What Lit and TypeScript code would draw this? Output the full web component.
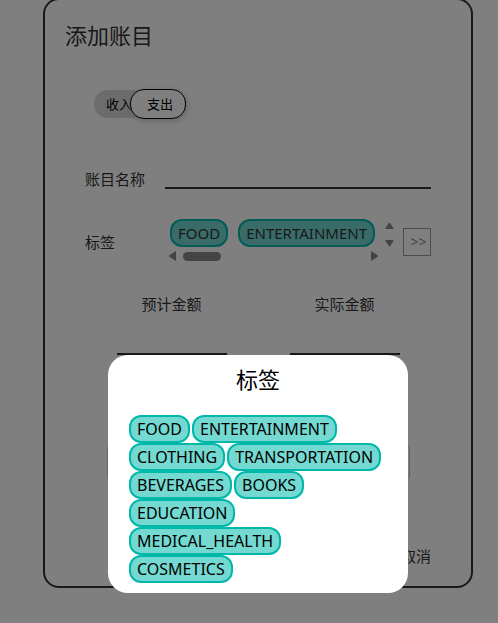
import { LitElement, html, css } from "lit";
import { customElement, property, state } from "lit/decorators.js";

const TAGS = [
  "FOOD", "ENTERTAINMENT", "CLOTHING", "TRANSPORTATION", "BEVERAGES",
  "BOOKS", "EDUCATION", "MEDICAL_HEALTH", "COSMETICS",
];

@customElement("tag-chip")
class TagChip extends LitElement {
  @property() label = "";
  static styles = css`
    :host { display: block; flex: none; }
    .chip {
      display: block;
      box-sizing: border-box;
      height: 28px;
      padding: 0 6px;
      border: 2px solid #00b8a9;
      border-radius: 12px;
      background: #73d9d1;
      color: inherit;
      font: inherit;
      font-family: "Noto Sans", sans-serif;
      line-height: 24px;
      white-space: nowrap;
    }
  `;
  render() {
    return html`<button class="chip" type="button">${this.label}</button>`;
  }
}

@customElement("app-root")
class AppRoot extends LitElement {
  @state() selected = ["FOOD", "ENTERTAINMENT"];

  static styles = css`
    :host {
      display: block;
      min-height: 100vh;
      overflow: hidden;
      background: #fff;
      color: #333;
      font: 15px/20px "Open Sans", "Noto Sans CJK SC", sans-serif;
    }
    * { box-sizing: border-box; }
    button, input { font: inherit; color: inherit; }
    .page { padding: 0 25px 35px 43px; }
    .card {
      display: flex;
      flex-direction: column;
      margin-top: -2px;
      padding: 20px 20px;
      border: 2px solid #333;
      border-radius: 16px;
    }
    h1 { margin: 0; font-size: 22px; font-weight: 400; line-height: 30px; }
    .switch {
      display: flex;
      align-items: center;
      align-self: flex-start;
      margin: 39px 0 0 29px;
      color: #000;
      font-size: 13px;
      line-height: 28px;
    }
    .switch label { display: block; }
    .switch input { position: absolute; opacity: 0; margin: 0; }
    .income {
      width: 56px;
      margin-right: -20px;
      padding-left: 12px;
      border-radius: 14px 0 0 14px;
      background: #d8d8d8;
    }
    .expense {
      z-index: 1;
      width: 56px;
      padding-left: 16px;
      border: 1px solid #000;
      border-radius: 14px;
      background: #fff;
      box-shadow: 1px 2px 6px #ccc;
    }
    .row {
      display: grid;
      grid-template-columns: 80px 1fr;
      align-items: center;
      padding: 0 20px;
    }
    .name { margin-top: 40px; }
    .name label { padding-top: 10px; }
    .line {
      width: 100%;
      min-width: 0;
      height: 30px;
      border: 0;
      border-bottom: 2px solid #333;
      background: none;
      outline: none;
    }
    .tags { margin-top: 30px; grid-template-columns: 80px 1fr 18px 28px; }
    .picked { display: flex; flex-direction: column; min-width: 0; }
    .chips { display: flex; gap: 10px; padding-left: 5px; }
    .hbar { display: flex; align-items: center; height: 18px; padding: 0 6px 0 3px; }
    .thumb { width: 38px; height: 9px; margin: 0 auto 0 6px; border-radius: 5px; background: #888; }
    svg { display: block; fill: #888; }
    .vbar { display: grid; gap: 9px; align-self: start; padding: 3px 0 0; }
    .more {
      height: 28px;
      padding: 0 0 0 3px;
      border: 1px solid #999;
      background: none;
      color: #888;
      font-size: 14px;
      line-height: 26px;
    }
    .amounts {
      display: grid;
      grid-template-columns: 110px 110px;
      justify-content: center;
      gap: 63px;
      margin-top: 29px;
      text-align: center;
    }
    .amounts label { display: grid; gap: 11px; }
    .note {
      display: block;
      align-self: center;
      width: 303px;
      height: 34px;
      margin-top: 90px;
      border: 1px solid #ccc;
      border-radius: 3px;
      resize: none;
    }
    .cancel {
      align-self: flex-end;
      margin: 67px 20px 0 0;
      padding: 0;
      border: 0;
      background: none;
    }
    .overlay {
      position: fixed;
      inset: 0;
      z-index: 2;
      display: flex;
      align-items: flex-end;
      justify-content: center;
      padding: 0 0 30px 18px;
      background: rgba(0, 0, 0, 0.5);
    }
    .dialog {
      width: 300px;
      padding: 8px 20px 10px;
      border-radius: 20px;
      background: #fff;
      color: #000;
      font-size: 16px;
    }
    h2 { margin: 0 0 20px; font-size: 22px; font-weight: 400; line-height: 32px; text-align: center; }
    .all { display: flex; flex-wrap: wrap; column-gap: 2px; padding: 0 4px 0 1px; }
  `;

  render() {
    return html`
      <main class="page">
        <form class="card">
          <h1>添加账目</h1>
          <div class="switch">
            <label class="income"><input type="radio" name="kind" />收入</label>
            <label class="expense"><input type="radio" name="kind" checked />支出</label>
          </div>
          <div class="row name">
            <label for="name">账目名称</label>
            <input class="line" id="name" />
          </div>
          <div class="row tags">
            <span>标签</span>
            <div class="picked">
              <div class="chips">${this.selected.map((t) => html`<tag-chip .label=${t}></tag-chip>`)}</div>
              <div class="hbar">
                <svg width="9" height="10"><path d="M8 1v8q0 1-1 .5L1.5 5.8q-1-.8 0-1.6L7 .5Q8 0 8 1z" /></svg>
                <div class="thumb"></div>
                <svg width="9" height="10"><path d="M1 1v8q0 1 1 .5l5.5-3.7q1-.8 0-1.6L2 .5Q1 0 1 1z" /></svg>
              </div>
            </div>
            <div class="vbar">
              <svg width="10" height="8"><path d="M1 7h7q1.200 0 .5-1L5.300 1.300q-.8-1-1.600 0L.5 6Q-.2 7 1 7z" /></svg>
              <svg width="10" height="8"><path d="M1 1h7q1.200 0 .5 1L5.300 6.700q-.8 1-1.600 0L.5 2Q-.2 1 1 1z" /></svg>
            </div>
            <button class="more" type="button">&gt;&gt;</button>
          </div>
          <div class="amounts">
            <label>预计金额<input class="line" /></label>
            <label>实际金额<input class="line" /></label>
          </div>
          <textarea class="note" aria-label="备注"></textarea>
          <button class="cancel" type="button">取消</button>
        </form>
      </main>
      <div class="overlay">
        <section class="dialog" role="dialog" aria-labelledby="title">
          <h2 id="title">标签</h2>
          <div class="all">${TAGS.map((t) => html`<tag-chip .label=${t}></tag-chip>`)}</div>
        </section>
      </div>
    `;
  }
}
